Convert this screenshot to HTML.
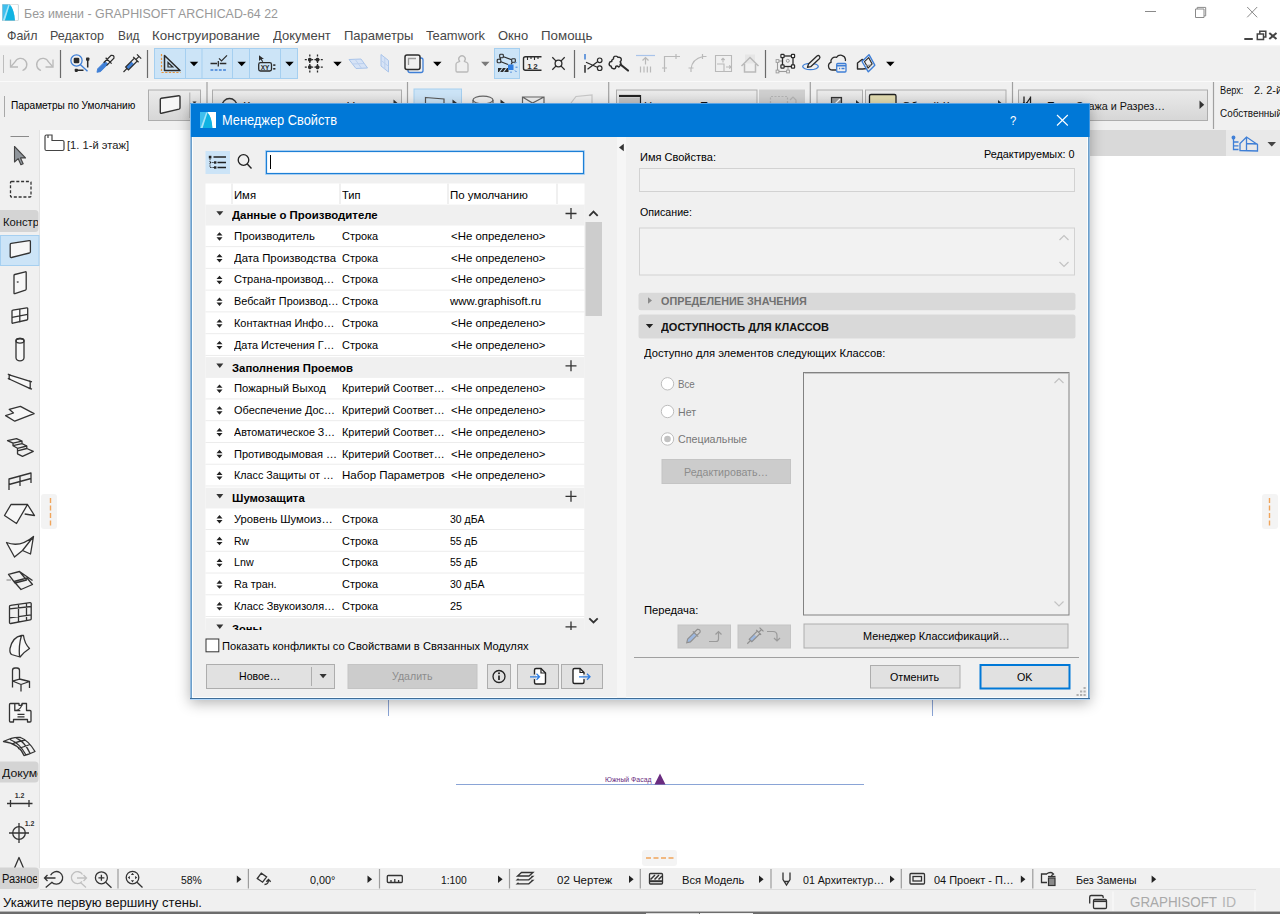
<!DOCTYPE html>
<html lang="ru"><head><meta charset="utf-8"><title>Менеджер Свойств</title>
<style>
html,body{margin:0;padding:0}
body{width:1280px;height:914px;position:relative;overflow:hidden;background:#fff;font-family:'Liberation Sans', sans-serif;}
.t{position:absolute;white-space:pre;line-height:1;transform-origin:0 50%;display:block}
div,svg{box-sizing:border-box}
</style></head><body>
<div style="position:absolute;left:0px;top:45px;width:1280px;height:85px;background:linear-gradient(#f8f8f8,#f0f0f0 2px)"></div>
<div style="position:absolute;left:0px;top:81px;width:1280px;height:1px;background:#fafafa"></div>
<div style="position:absolute;left:0px;top:130px;width:40px;height:738px;background:#f0f0f0"></div>
<div style="position:absolute;left:0px;top:868px;width:1280px;height:43px;background:#f0f0f0"></div>
<div style="position:absolute;left:0px;top:911px;width:1280px;height:1px;background:#b4b4b4"></div>
<div style="position:absolute;left:0px;top:912px;width:1280px;height:2px;background:#6d6d6d"></div>
<div style="position:absolute;left:646px;top:913px;width:53px;height:1px;background:#d8d8d8"></div>
<div style="position:absolute;left:700px;top:913px;width:53px;height:1px;background:#f0f0f0"></div>
<svg style="position:absolute;left:2px;top:3.5px" width="16.7" height="17" viewBox="0 0 16 16" preserveAspectRatio="none"><rect x="0" y="0" width="16" height="16" rx="1.2" fill="#3fbfee"/><path d="M7.300 0H16V16H12.300Q11.800 5 7.300 0z" fill="#ffffff"/><path d="M2.300 16L7 .8Q11.600 4 12.400 16z" fill="#10b3e2"/><path d="M.6 16L6.200 .3L7.400 .9L2.600 16z" fill="#a6e4f9"/><rect x=".3" y=".3" width="15.400" height="15.400" rx="1.200" fill="none" stroke="#c9c9c9" stroke-width=".6"/></svg>
<span class="t" style="left:24.00px;top:7px;font-size:13.4px;color:#999; transform:scaleX(0.9256);">Без имени - GRAPHISOFT ARCHICAD-64 22</span>
<div style="position:absolute;left:1145px;top:11px;width:10.5px;height:1px;background:#8a8a8a"></div>
<svg style="position:absolute;left:1194px;top:6px;" width="14" height="13" viewBox="0 0 14 13"><path d="M1.500 3h8.500v8.500h-8.500z M3.200 3v-1.600h8.500v8.500h-1.700" fill="none" stroke="#8a8a8a" stroke-width="1"/></svg>
<svg style="position:absolute;left:1246px;top:6px;" width="13" height="13" viewBox="0 0 13 13"><path d="M1.200 1l10 10.300M11.200 1l-10 10.300" stroke="#8a8a8a" stroke-width="1" fill="none"/></svg>
<span class="t" style="left:6.50px;top:29px;font-size:13px;color:#484848; transform:scaleX(0.9541);">Файл</span>
<span class="t" style="left:50.00px;top:29px;font-size:13px;color:#484848; transform:scaleX(0.9648);">Редактор</span>
<span class="t" style="left:117.50px;top:29px;font-size:13px;color:#484848; transform:scaleX(0.9137);">Вид</span>
<span class="t" style="left:152.00px;top:29px;font-size:13px;color:#484848; transform:scaleX(1.0246);">Конструирование</span>
<span class="t" style="left:272.70px;top:29px;font-size:13px;color:#484848; transform:scaleX(1.0022);">Документ</span>
<span class="t" style="left:343.80px;top:29px;font-size:13px;color:#484848; transform:scaleX(1.0027);">Параметры</span>
<span class="t" style="left:426.00px;top:29px;font-size:13px;color:#484848; transform:scaleX(0.9958);">Teamwork</span>
<span class="t" style="left:497.60px;top:29px;font-size:13px;color:#484848; transform:scaleX(0.9961);">Окно</span>
<span class="t" style="left:541.20px;top:29px;font-size:13px;color:#484848; transform:scaleX(1.0255);">Помощь</span>
<svg style="position:absolute;left:1244px;top:29px;" width="36" height="14" viewBox="0 0 36 14"><path d="M.3 10h8.500" stroke="#444" stroke-width="2"/><path d="M13.300 5h6.200v5.500h-6.200z M15.800 4.500v-2.200h6v5.700h-2" fill="none" stroke="#444" stroke-width="1.500"/><path d="M25.300 4l7.200 6M32.500 4l-7.200 6" stroke="#444" stroke-width="2"/></svg>
<svg style="position:absolute;left:0;top:46px" width="1280" height="36" viewBox="0 46 1280 36"><rect x="154.5" y="48.5" width="143" height="30" fill="#cce4f7" stroke="#a5cff0"/><path d="M185.5 48.5v30" stroke="#a5cff0"/><path d="M202 48.5v30" stroke="#a5cff0"/><path d="M232.5 48.5v30" stroke="#a5cff0"/><path d="M249.5 48.5v30" stroke="#a5cff0"/><path d="M280.5 48.5v30" stroke="#a5cff0"/><rect x="494.5" y="48.5" width="25" height="30" fill="#cce4f7" stroke="#a5cff0"/><path d="M3.5 55v18" stroke="#bdbdbd"/><path d="M60.5 50v28" stroke="#6a6a6a" stroke-width="1.2"/><path d="M147.5 50v28" stroke="#6a6a6a" stroke-width="1.2"/><path d="M574.5 50v28" stroke="#6a6a6a" stroke-width="1.2"/><path d="M765.5 50v28" stroke="#6a6a6a" stroke-width="1.2"/><g fill="none" stroke="#b9b9b9" stroke-width="1.3"><path d="M10.5 59.5v7.5h7.5"/><path d="M11 66.5l4-4.5a6.2 6.2 0 1 1 7.5 8.500"/></g><g fill="none" stroke="#b9b9b9" stroke-width="1.3"><path d="M53 59.5v7.500h-7.500"/><path d="M52.500 66.500l-4-4.500a6.200 6.200 0 1 0-7.500 8.500"/></g><circle cx="76.500" cy="60.500" r="5.600" fill="none" stroke="#3f7fd6" stroke-width="1.300"/><path d="M80.500 64.700l7 6.500" stroke="#3f7fd6" stroke-width="1.400"/><rect x="73.700" y="57.700" width="5.600" height="5.600" rx="1.300" fill="#2b2b2b"/><path d="M87.700 59v8.500M76 70.300h7.500" stroke="#2b2b2b" stroke-width="1.500"/><rect x="86" y="57.500" width="3.400" height="3.200" rx=".8" fill="#2b2b2b"/><rect x="74.700" y="68.700" width="3.200" height="3.200" rx=".8" fill="#2b2b2b"/><g transform="translate(105.800 63.500) rotate(45)"><path d="M-2 -1h4v10.500l-2 3l-2-3z" fill="#3f7fd6" stroke="#3f7fd6" stroke-width=".8"/><path d="M-2 -9.500q2 -2.800 4 0v5.500h-4z M-2 -4v5M2 -4v5 M-4.200 -4h8.400" fill="none" stroke="#2b2b2b" stroke-width="1.200"/></g><g transform="translate(132 63.500) rotate(45)"><path d="M-2 -1h4v8h-4z" fill="#3f7fd6"/><path d="M-2 -5.500h4v12.500h-4z M0 7v5 M-3.800 -5.500h7.600 M0 -5.500v-4.500 M-3 -10h6" fill="none" stroke="#2b2b2b" stroke-width="1.200"/></g><path d="M161.500 54v18.500h19" fill="none" stroke="#e8943a" stroke-width="1.200" stroke-dasharray="2.200 1.500"/><path d="M164.500 55.500v15h15.500z" fill="none" stroke="#2b2b2b" stroke-width="1.500" stroke-linejoin="round"/><path d="M168 62.500v4.500h4.800z" fill="none" stroke="#2b2b2b" stroke-width="1.200"/><path d="M189.75 61.75h8.5l-4.25 4.5z" fill="#000"/><path d="M210.500 63.500h6.500M218.300 61v5.500M219.800 63.500h6.500" stroke="#2b2b2b" stroke-width="1.300"/><path d="M219 58.300l2.500 2.500l5.500-5.500" fill="none" stroke="#2b2b2b" stroke-width="1.200"/><path d="M210.500 70h16" stroke="#3f7fd6" stroke-width="1.400" stroke-dasharray="2.800 1.400"/><path d="M237.45 61.75h8.5l-4.25 4.5z" fill="#000"/><path d="M259 55.300v5.800l1.700-1.500l1.500 2.400l1-.6l-1.500-2.300h2.300z" fill="#2b2b2b"/><rect x="258.700" y="62.700" width="12.800" height="8.300" rx="1.800" fill="none" stroke="#2b2b2b" stroke-width="1.300"/><rect x="273.200" y="64.300" width="2.200" height="1.600" fill="#2b2b2b"/><rect x="273.200" y="68" width="2.200" height="1.600" fill="#2b2b2b"/><text x="265.100" y="69.600" font-size="6.500" font-weight="700" text-anchor="middle" fill="#2b2b2b" font-family="Liberation Sans, sans-serif">XY</text><path d="M285.25 61.75h8.5l-4.25 4.5z" fill="#000"/><path d="M309.800 54.500v18M317.500 54.500v18M304.800 59.700h18M304.800 67.200h18" stroke="#2b2b2b" stroke-width="1.300" stroke-dasharray="2 1.200"/><rect x="308.1" y="58" width="3.400" height="3.400" rx=".8" fill="#2b2b2b"/><rect x="308.1" y="65.5" width="3.400" height="3.400" rx=".8" fill="#2b2b2b"/><rect x="315.8" y="58" width="3.400" height="3.400" rx=".8" fill="#2b2b2b"/><rect x="315.8" y="65.5" width="3.400" height="3.400" rx=".8" fill="#2b2b2b"/><path d="M333.25 61.75h8.5l-4.25 4.5z" fill="#000"/><path d="M349 59.500l12-.5l6.500 9l-11.500.5z" fill="#d6e3f6" stroke="#a9c4ea" stroke-width="1"/><path d="M355 59.200l6.500 9 M352.500 64l11.500-.500" fill="none" stroke="#bcd0ee" stroke-width="1"/><path d="M381 54.500v11.500l7.500 6v-11.500z" fill="#d6e3f6" stroke="#a9c4ea" stroke-width="1"/><path d="M384.800 57.500v11.500 M381 60.300l7.500 6" fill="none" stroke="#bcd0ee" stroke-width="1"/><rect x="408" y="58" width="15" height="14.500" rx="2" fill="none" stroke="#3f7fd6" stroke-width="1.300"/><rect x="405" y="55" width="15" height="14.500" rx="2" fill="#f0f0f0" stroke="#2b2b2b" stroke-width="1.500"/><path d="M408.500 65v-6.500h7.500" fill="none" stroke="#9a9a9a" stroke-width="1.300"/><path d="M433.05 61.75h8.5l-4.25 4.5z" fill="#000"/><path d="M459.700 61.300a3.200 3.200 0 1 1 4.600 0 l2.500 1.200q1.200.6 1.200 2v6.300a1.200 1.200 0 0 1-1.200 1.200h-9.600a1.200 1.200 0 0 1-1.200-1.200v-6.300q0-1.400 1.200-2z" fill="none" stroke="#b9b9b9" stroke-width="1.300" stroke-linejoin="round"/><path d="M481.05 61.75h8.5l-4.25 4.5z" fill="#7a7a7a"/><path d="M501.500 56l-2.500 5l9 3.500 M501.500 56l12 4.500l-2.500 4" fill="none" stroke="#2b2b2b" stroke-width="1.200"/><rect x="499.7" y="54.2" width="3.600" height="3.600" rx=".9" fill="#cce4f7" stroke="#2b2b2b" stroke-width="1.100"/><rect x="497.2" y="59.2" width="3.600" height="3.600" rx=".9" fill="#cce4f7" stroke="#2b2b2b" stroke-width="1.100"/><rect x="511.7" y="58.7" width="3.600" height="3.600" rx=".9" fill="#cce4f7" stroke="#2b2b2b" stroke-width="1.100"/><rect x="498" y="68" width="10.500" height="4" fill="#2b2b2b"/><path d="M499.500 72l3-4M503.500 72l3-4" stroke="#cce4f7" stroke-width="1.100"/><rect x="508" y="64.500" width="5.500" height="5.500" fill="#2f7de0"/><path d="M515 63.500l1.500-1.500M515.500 67.200h2M515 70.500l1.500 1.500M511 71.500v1.500" stroke="#3f7fd6" stroke-width="1"/><path d="M541.500 56.700h-16a2 2 0 0 0-2 2v9.500a2 2 0 0 0 2 2h16" fill="none" stroke="#2b2b2b" stroke-width="1.400"/><path d="M527.500 57v3M531 57v2M534.500 57v3M538 57v2" stroke="#2b2b2b" stroke-width="1.100"/><text x="533.300" y="68.600" font-size="8" font-weight="700" text-anchor="middle" fill="#2b2b2b" font-family="Liberation Sans, sans-serif" letter-spacing="1.600">12</text><circle cx="558.500" cy="63.500" r="3.400" fill="none" stroke="#2b2b2b" stroke-width="1.300"/><path d="M552.300 57.300l3.800 3.800M564.700 57.300l-3.800 3.800M552.300 69.700l3.800-3.800M564.700 69.700l-3.800-3.800" stroke="#2b2b2b" stroke-width="1.300"/><path d="M585 54v5.500" stroke="#3f7fd6" stroke-width="1.500"/><path d="M585 65v7.700" stroke="#2b2b2b" stroke-width="1.500"/><path d="M586 62.300l11.300 5M587.500 69.300l10-7.500" stroke="#2b2b2b" stroke-width="1.200"/><circle cx="599.700" cy="60.300" r="2.300" fill="none" stroke="#2b2b2b" stroke-width="1.200"/><circle cx="599.700" cy="68.200" r="2.300" fill="none" stroke="#2b2b2b" stroke-width="1.200"/><path d="M613.500 58.800q-.3-2.600 2.200-2.700q1.600-.1 2.300 1.300q2.800-.6 3.300 1.800q.3 1.700-1.200 2.600q1.700 1.800 .2 3.600l-1.500 1.700q-1.400-1.700-3-.8q.2 2.500-2.300 2.500q-2.200-.2-2.300-2.500q-2.400-.6-2-3q.5-2 2.600-1.800q-.5-1.800 1.700-2.700z" fill="none" stroke="#2b2b2b" stroke-width="1.400" stroke-linejoin="round"/><path d="M620.500 64.500l7.500 6" stroke="#2b2b2b" stroke-width="2.200" stroke-linecap="round"/><path d="M636 55.500h19" stroke="#a9c4ea" stroke-width="1.200"/><path d="M645.500 57.500v7M642.500 60.500l3-3l3 3" fill="none" stroke="#b9b9b9" stroke-width="1.200"/><path d="M640.500 66.500v6M644 66.500v6M647.300 66.500v6M650.500 66.500v6" stroke="#b9b9b9" stroke-width="1.200"/><path d="M664.500 72v-15.500h15.500M676 54v5M662 68h5" fill="none" stroke="#b9b9b9" stroke-width="1.200"/><path d="M691 72v-3q1-10 12-12.500h3.500M702.500 54v5M688.500 68h5" fill="none" stroke="#b9b9b9" stroke-width="1.200"/><path d="M715.500 55.500h16v16h-16z M717 64h7v7.500 M723 58.500v4M721.300 60l1.700-1.700l1.700 1.700 M726 67h5M729.300 65.300l1.700 1.700l-1.700 1.700" fill="none" stroke="#b9b9b9" stroke-width="1.100"/><rect x="745" y="54.500" width="10" height="9" fill="#e6e6e6"/><path d="M741.500 66l8.500-8.500l8.500 8.500 M744.500 64v8h11v-8" fill="none" stroke="#b9b9b9" stroke-width="1.500"/><rect x="777.500" y="61" width="10.500" height="10.500" fill="none" stroke="#9a9a9a" stroke-width="1.100"/><rect x="776.1" y="59.6" width="2.800" height="2.800" fill="#f0f0f0" stroke="#9a9a9a" stroke-width=".9"/><rect x="776.1" y="70.1" width="2.800" height="2.800" fill="#f0f0f0" stroke="#9a9a9a" stroke-width=".9"/><rect x="786.6" y="70.1" width="2.800" height="2.800" fill="#f0f0f0" stroke="#9a9a9a" stroke-width=".9"/><rect x="782.500" y="56" width="10.500" height="10.500" fill="#f0f0f0" stroke="#2b2b2b" stroke-width="1.300"/><circle cx="787.800" cy="60.800" r="1.500" fill="none" stroke="#9a9a9a"/><rect x="780.9" y="54.4" width="3.200" height="3.200" rx=".6" fill="#f0f0f0" stroke="#2b2b2b" stroke-width="1.200"/><rect x="791.4" y="54.4" width="3.200" height="3.200" rx=".6" fill="#f0f0f0" stroke="#2b2b2b" stroke-width="1.200"/><rect x="780.9" y="64.9" width="3.200" height="3.200" rx=".6" fill="#f0f0f0" stroke="#2b2b2b" stroke-width="1.200"/><rect x="791.4" y="64.9" width="3.200" height="3.200" rx=".6" fill="#f0f0f0" stroke="#2b2b2b" stroke-width="1.200"/><ellipse cx="810.500" cy="66.500" rx="7.800" ry="3.200" fill="none" stroke="#3f7fd6" stroke-width="1.300"/><path d="M807.500 67.300l1-3.300l8.500-8q1.500-1 2.500 .2q1 1.300-.2 2.500l-8.600 8z" fill="#f0f0f0" stroke="#2b2b2b" stroke-width="1.300" stroke-linejoin="round"/><path d="M836 70h-3.500a4 4 0 0 1-1.500-7.700a4.300 4.300 0 0 1 5.500-5a5 5 0 0 1 9 2.200q0 .8-.2 1.500" fill="none" stroke="#2b2b2b" stroke-width="1.300"/><rect x="836.700" y="63.500" width="9.300" height="8.500" rx="1" fill="#f0f0f0" stroke="#3f7fd6" stroke-width="1.300"/><path d="M836.700 65.700h9.300" stroke="#3f7fd6" stroke-width="1.600"/><path d="M839 68.500h1.200M841.500 68.500h3" stroke="#3f7fd6" stroke-width="1.300"/><path d="M857.500 63l4.500-3.500l5 1.500v7.500l-4.500 .5h-5z" fill="none" stroke="#2b2b2b" stroke-width="1.400" stroke-linejoin="round"/><path d="M862 61.500l7-6.800l5.800 10.500l-6.500 6.600z" fill="#f0f0f0" stroke="#3f7fd6" stroke-width="1.400" stroke-linejoin="round"/><path d="M864.500 61.700l4.200-4l3.400 6.300l-4 4z" fill="none" stroke="#2b2b2b" stroke-width="1.100"/><path d="M866 65.500l5.500-.5" stroke="#888" stroke-width="1"/><path d="M886.05 61.75h8.5l-4.25 4.5z" fill="#000"/></svg>
<svg style="position:absolute;left:0;top:82px" width="1280" height="48" viewBox="0 82 1280 48"><defs><linearGradient id="ibg" x1="0" y1="0" x2="0" y2="1"><stop offset="0" stop-color="#ebebeb"/><stop offset="1" stop-color="#d6d6d6"/></linearGradient></defs><path d="M4.500 96v21" stroke="#a8a8a8"/><path d="M207 82v47" stroke="#a0a0a0" stroke-width="1.200"/><path d="M407.5 82v47" stroke="#a0a0a0" stroke-width="1.200"/><path d="M608.7 82v47" stroke="#a0a0a0" stroke-width="1.200"/><path d="M810.3 82v47" stroke="#a0a0a0" stroke-width="1.200"/><path d="M1012.5 82v47" stroke="#a0a0a0" stroke-width="1.200"/><path d="M1213.5 82v47" stroke="#a0a0a0" stroke-width="1.200"/><rect x="148.5" y="90" width="52" height="30.500" fill="url(#ibg)" stroke="#adadad"/><path d="M189.800 92.500v25.500" stroke="#adadad"/><path d="M160.300 99.500q0-1 1-1.200l17.500-2.600q1.200-.1 1.200 1.100v11q0 1-1 1.300l-17.500 4.200q-1.200.2-1.200-1z" fill="#f6f6f6" stroke="#333" stroke-width="1.400"/><path d="M192.500 101.500h4l-2 2.500z" fill="#333"/><rect x="212.5" y="90" width="189" height="30.500" fill="url(#ibg)" stroke="#adadad"/><circle cx="229.500" cy="106" r="7.500" fill="none" stroke="#333" stroke-width="1.300"/><path d="M393.500 99.500l4 3.500l-4 3.500z" fill="#333"/><rect x="414" y="89" width="47.500" height="32" fill="#cce4f7" stroke="#a5cff0"/><path d="M425.500 97.500l18.500 1.500v14h-18.500z" fill="none" stroke="#555" stroke-width="1.200"/><path d="M452.500 99.500l4.500 3.500l-4.500 3.500z" fill="#333"/><ellipse cx="483" cy="100" rx="10" ry="3.800" fill="none" stroke="#666" stroke-width="1.200"/><path d="M473 100v10M493 100v10" stroke="#666" stroke-width="1.200"/><path d="M500.500 99.500l4.500 3.500l-4.500 3.500z" fill="#333"/><path d="M522.500 97h21.500v14h-21.500zM522.500 97l10 6l11.500-6" fill="none" stroke="#666" stroke-width="1.200"/><path d="M571 103l5-6.500l16-1.500v10" fill="none" stroke="#c8c8c8" stroke-width="1.200"/><rect x="616.5" y="90" width="140.5" height="30.500" fill="url(#ibg)" stroke="#adadad"/><path d="M619 96h21" stroke="#222" stroke-width="2.200"/><path d="M619 98h21v10h-21z" fill="#c4c4c4"/><path d="M640.500 95v13" stroke="#222" stroke-width="1.200"/><rect x="759.5" y="90" width="45" height="30.500" fill="#cfcfcf" stroke="#cfcfcf"/><path d="M770.500 103v-6.500h17v6.500" fill="none" stroke="#b4b4b4" stroke-width="1.200" stroke-dasharray="2 1.500"/><path d="M790 100l3-3l3 3v4" fill="none" stroke="#b4b4b4" stroke-width="1.200"/><rect x="817" y="90" width="45.5" height="30.500" fill="url(#ibg)" stroke="#adadad"/><rect x="831.500" y="97.500" width="10" height="10" fill="#9a9a9a" stroke="#333" stroke-width="1.200"/><path d="M833 106l7-7" stroke="#fff" stroke-width="1.200"/><path d="M856 100l4 3.500l-4 3.500z" fill="#333"/><rect x="865.5" y="90" width="140.5" height="30.500" fill="url(#ibg)" stroke="#adadad"/><rect x="869.500" y="94.500" width="26.500" height="22" rx="1.500" fill="#e3dcb0" stroke="#222" stroke-width="1.300"/><path d="M998 100l4 3.500l-4 3.500z" fill="#333"/><rect x="1018.5" y="90" width="189" height="30.500" fill="url(#ibg)" stroke="#adadad"/><path d="M1024 108v-11.500M1030.500 108v-11.500M1024 107l6.500-9.500" stroke="#222" stroke-width="1.300"/><path d="M1199.500 100.500l4.700 4.200l-4.700 4.200z" fill="#333"/></svg>
<span class="t" style="left:10.60px;top:100px;font-size:11px;color:#000; transform:scaleX(0.9190);">Параметры по Умолчанию</span>
<span class="t" style="left:1047.00px;top:101px;font-size:11.8px;color:#111; transform:scaleX(0.9146);">План Этажа и Разрез…</span>
<span class="t" style="left:242.70px;top:101px;font-size:11.8px;color:#111; transform:scaleX(1.0443);">Конструктивные - Несущие</span>
<span class="t" style="left:644.30px;top:101px;font-size:11.8px;color:#111; transform:scaleX(0.9607);">Наружная Поверхность</span>
<span class="t" style="left:901.75px;top:101px;font-size:11.8px;color:#111; transform:scaleX(0.9655);">Общий Конструктивный</span>
<span class="t" style="left:1219.60px;top:86px;font-size:10px;color:#111; transform:scaleX(0.9188);">Верх:</span>
<span class="t" style="left:1253.70px;top:86px;font-size:10px;color:#111; transform:scaleX(1.0933);">2. 2-й</span>
<span class="t" style="left:1219.60px;top:109px;font-size:10px;color:#111; transform:scaleX(0.9910);">Собственный</span>
<div style="position:absolute;left:1000px;top:130px;width:226px;height:26px;background:#d9d9d9"></div>
<div style="position:absolute;left:1226px;top:130px;width:54px;height:26px;background:#e9e9e9"></div>
<svg style="position:absolute;left:1230px;top:134px;" width="52" height="20" viewBox="0 0 52 20"><g fill="none" stroke="#3f7fd6" stroke-width="1.300"><path d="M3.500 3.500v12h5M3.500 8h5M3.500 11.800h5"/><circle cx="3.500" cy="3.500" r="1.300" fill="#3f7fd6"/><path d="M10 16.500v-7l6.500-6.500l11 7.500v6.500zM16.500 3l0 13.500M16.500 9.500l11 .5"/></g><path d="M37.500 8h8.500l-4.250 4.500z" fill="#444"/></svg>
<div style="position:absolute;left:39px;top:130px;width:1px;height:738px;background:#e2e2e2"></div>
<svg style="position:absolute;left:0;top:130px" width="40" height="760" viewBox="0 130 40 760"><path d="M10.500 136.500h18.500" stroke="#8a8a8a"/><path d="M14.500 146.500v15.500l3.700-3.300l2.700 6l2.300-1l-2.700-5.800h5z" fill="#8f959b" stroke="#444" stroke-width="1.100" stroke-linejoin="round"/><rect x="10.500" y="181.500" width="20.500" height="15.500" rx="1" fill="none" stroke="#333" stroke-width="1.300" stroke-dasharray="3 1.800"/><rect x="-3" y="210" width="41.500" height="22" rx="3.500" fill="#d4d4d4"/><rect x=".5" y="235.500" width="38.500" height="30" fill="#cce4f7" stroke="#a5cff0"/><path d="M10.200 244.500q0-1 1-1.200l18-2.700q1.200-.1 1.200 1.100v10q0 1-1 1.300l-18 4.500q-1.200.2-1.200-1z" fill="#f7f7f7" stroke="#333" stroke-width="1.300" stroke-linejoin="round"/><path d="M14 275.500q0-.8.800-1l10.500-2.700q.9-.2.900.7v16.500q0 .8-.8 1.100l-10.500 3.500q-.9.300-.9-.6z" fill="#f7f7f7" stroke="#333" stroke-width="1.300" stroke-linejoin="round"/><path d="M16.800 282.200l1.800-.4" stroke="#333" stroke-width="1.300"/><path d="M12 311q0-.8.800-.9l14-2.300q.9-.1.900.7v10.500q0 .8-.8 1l-14 3.200q-.9.200-.9-.6z" fill="#f7f7f7" stroke="#333" stroke-width="1.300" stroke-linejoin="round"/><path d="M19.800 309v13.300M12 317.300l15.700-3" fill="none" stroke="#333" stroke-width="1.300" stroke-linejoin="round"/><path d="M16 340.800a4 2.300 0 0 1 8 0v17a4 3 0 0 1 -8 0z" fill="#f7f7f7" stroke="#333" stroke-width="1.300" stroke-linejoin="round"/><ellipse cx="20" cy="340.800" rx="4" ry="2.300" fill="none" stroke="#333" stroke-width="1.300" stroke-linejoin="round"/><path d="M9.200 374.800l21 6.500v7.300l-21-9.600z" fill="#f7f7f7" stroke="#333" stroke-width="1.300" stroke-linejoin="round"/><path d="M7.800 374.200l2.600.8M7.800 378.400l2.600 1M29 381l3 .9M28.800 388.200l3.200 1" fill="none" stroke="#333" stroke-width="1.300" stroke-linejoin="round"/><path d="M9.200 409.300l11.200-2.900l13.700 7.200l-19.300 7.600l-9.200-5.600l7.900-2.600z" fill="#f7f7f7" stroke="#333" stroke-width="1.300" stroke-linejoin="round"/><path d="M7.500 440.600l9-1.900l5.500 2.500l-9 2zM13 443.200v2.500l9-2v-2.500M22 443.700l4.800 2.300l-9.300 2.300l-4.500-2.600M17.500 448.300v2.500l9.300-2.300v-2.500M26.800 448.500l6.500 2.800l-10.800 5l-5-2.500v-3" fill="none" stroke="#333" stroke-width="1.300" stroke-linejoin="round"/><path d="M9 490v-11l22-6v10M9 484.500l22-6M20 476v10" fill="none" stroke="#333" stroke-width="1.300" stroke-linejoin="round"/><path d="M4.500 515.500l6.500-11h16.500l-11 19z M27.500 504.500l7 11l-9.800-1.500" fill="#f7f7f7" stroke="#333" stroke-width="1.300" stroke-linejoin="round"/><path d="M6.500 542.500q13.500 5.500 27-6l-3 17.500l-8-3.500l-8 6.500z M22.500 550.500l11-14" fill="#f7f7f7" stroke="#333" stroke-width="1.300" stroke-linejoin="round"/><path d="M8.500 574.300l11-2.800l7 8.500l-11.500 3z M19.500 571.500l13 9 M14 581.500l13-3.500l5.500 6.500l-11.500 5z" fill="none" stroke="#333" stroke-width="1.300" stroke-linejoin="round"/><path d="M6.500 580h4.500" stroke="#999" stroke-width="1.300"/><path d="M9.500 606.500q0-1 1-1.100l19.500-2.700q1.200-.1 1.200 1v15q0 1-1 1.200l-19.500 3.600q-1.200.2-1.200-1z M18.500 604.300v18M26.500 603.200v16.700M9.500 608.800l21.700-2.300M9.500 617.800l21.700-3" fill="none" stroke="#333" stroke-width="1.300" stroke-linejoin="round"/><path d="M21.500 635.500q-9 1.500-11.500 13q-.5 4.500 1.500 6l8.500 2.500q4-5 9.500-8.500q-5-5-6-13z M21.500 635.500q-3 10-2 21.500" fill="#f7f7f7" stroke="#333" stroke-width="1.300" stroke-linejoin="round"/><path d="M12.500 681v-10.500q0-2.500 2.500-2.500h2q2.500 0 2.500 2.500v8.500 M12.500 681l7-2l10 2.500l-8.500 3z M12.500 681v6.500M21 684.500v7M29.500 681.500v6.500" fill="none" stroke="#333" stroke-width="1.300" stroke-linejoin="round"/><path d="M10.500 703.500h8.500v1.800h3v-1.800h4.500v7h3.500q1 0 1 1v9.500q0 1-1 1h-2.500v-2.500h-14v2.500h-3q-1 0-1-1v-16.500q0-1 1-1z" fill="#f7f7f7" stroke="#333" stroke-width="1.300" stroke-linejoin="round"/><path d="M14.800 704v6.700h5.500M14.800 710.700q6-.5 7.200-6.700M17.500 714.300h7M17.500 716.800h7" fill="none" stroke="#333" stroke-width="1.300" stroke-linejoin="round"/><path d="M3.500 741.500q10-5 17-4q8 3 14.500 14q-6 3-11 4q-5-12-20.500-14z M10 739.500q10 4 16 15.500M16 737.800q9 4 14 15.500M11.500 744q8-3 14-4M18 748.500q7-2 12-4" fill="none" stroke="#333" stroke-width="1.300" stroke-linejoin="round"/><rect x="-3" y="761.500" width="41.500" height="21" rx="3.500" fill="#d4d4d4"/><path d="M7 803.500h25.500M10.500 800v7M29 800v7" stroke="#333" stroke-width="1.300"/><text x="19.500" y="798" font-size="7" font-weight="700" text-anchor="middle" fill="#333" font-family="Liberation Sans, sans-serif">1.2</text><circle cx="19" cy="833" r="6.300" fill="none" stroke="#333" stroke-width="1.300" stroke-linejoin="round"/><path d="M19 823v20M9 833h20" stroke="#333" stroke-width="1.300"/><text x="29.500" y="825.500" font-size="7" font-weight="700" text-anchor="middle" fill="#333" font-family="Liberation Sans, sans-serif">1.2</text><path d="M14.500 868l4.500-10.500l4.500 10.500" fill="none" stroke="#333" stroke-width="1.300" stroke-linejoin="round"/><rect x="-3" y="867.500" width="42" height="21.500" rx="4" fill="#d4d4d4"/></svg>
<div style="position:absolute;left:0;top:205px;width:38px;height:30px;overflow:hidden"><span class="t" style="left:2.50px;top:12px;font-size:11.8px;color:#111; transform:scaleX(0.9521);">Констр</span></div>
<div style="position:absolute;left:0;top:757px;width:38px;height:30px;overflow:hidden"><span class="t" style="left:2.00px;top:11px;font-size:11.8px;color:#111; transform:scaleX(1.0390);">Докуме</span></div>
<div style="position:absolute;left:0;top:862px;width:37px;height:30px;overflow:hidden"><span class="t" style="left:2.00px;top:11px;font-size:12px;color:#111; transform:scaleX(0.9211);">Разное</span></div>
<svg style="position:absolute;left:44px;top:134px;" width="22" height="18" viewBox="0 0 22 18"><path d="M1 2.500q0-1.500 1.500-1.500h5.500v5.500h10.500q1.500 0 1.500 1.500v7q0 1.500-1.500 1.500h-16q-1.500 0-1.500-1.500z M4 1v3" fill="none" stroke="#444" stroke-width="1.200"/></svg>
<span class="t" style="left:66.50px;top:140px;font-size:11px;color:#222; transform:scaleX(1.0148);">[1. 1-й этаж]</span>
<div style="position:absolute;left:41px;top:494px;width:16px;height:35px;background:#f3f3f3;border-radius:3px"></div>
<svg style="position:absolute;left:47.5px;top:497.5px;" width="5" height="29" viewBox="0 0 5 29"><path d="M2.500 0v28" stroke="#f0a45a" stroke-width="1.400" stroke-dasharray="5 2.500"/></svg>
<div style="position:absolute;left:1261.5px;top:494px;width:16.5px;height:35px;background:#f4f4f4;border-radius:3px"></div>
<svg style="position:absolute;left:1266.5px;top:497.5px;" width="5" height="29" viewBox="0 0 5 29"><path d="M2.500 0v28" stroke="#f0a45a" stroke-width="1.400" stroke-dasharray="5 2.500"/></svg>
<div style="position:absolute;left:642px;top:850px;width:34.5px;height:16px;background:#f4f4f4;border-radius:3px"></div>
<svg style="position:absolute;left:645.6px;top:855.5px;" width="28" height="4" viewBox="0 0 28 4"><path d="M0 2h28" stroke="#f0a45a" stroke-width="1.400" stroke-dasharray="5 2.500"/></svg>
<div style="position:absolute;left:387.5px;top:699px;width:1px;height:17px;background:#8aa4d6"></div>
<div style="position:absolute;left:932px;top:699px;width:1px;height:17px;background:#8aa4d6"></div>
<div style="position:absolute;left:456px;top:784px;width:408px;height:1px;background:#8aa4d6"></div>
<svg style="position:absolute;left:654px;top:773px;" width="12" height="12" viewBox="0 0 12 12"><path d="M6 .5l5.500 11h-11z" fill="#6a2c80"/></svg>
<span class="t" style="left:604.50px;top:777px;font-size:6.5px;color:#6a2c80; transform:scaleX(1.0610);">Южный Фасад</span>
<svg style="position:absolute;left:0;top:868px" width="1280" height="44" viewBox="0 868 1280 44"><path d="M40 889.500h1216" stroke="#dcdcdc"/><path d="M118 869v19.500" stroke="#9c9c9c" stroke-width="1.200"/><path d="M248.4 869v19.500" stroke="#9c9c9c" stroke-width="1.200"/><path d="M379.5 869v19.500" stroke="#9c9c9c" stroke-width="1.200"/><path d="M509.5 869v19.500" stroke="#9c9c9c" stroke-width="1.200"/><path d="M640.3 869v19.500" stroke="#9c9c9c" stroke-width="1.200"/><path d="M771 869v19.500" stroke="#9c9c9c" stroke-width="1.200"/><path d="M901.3 869v19.500" stroke="#9c9c9c" stroke-width="1.200"/><path d="M1032.8 869v19.500" stroke="#9c9c9c" stroke-width="1.200"/><path d="M236.8 875.400l4.600 3.800l-4.600 3.800z" fill="#222"/><path d="M367.5 875.400l4.600 3.800l-4.600 3.800z" fill="#222"/><path d="M498 875.400l4.600 3.800l-4.600 3.800z" fill="#222"/><path d="M629 875.400l4.600 3.800l-4.600 3.800z" fill="#222"/><path d="M759 875.400l4.600 3.800l-4.600 3.800z" fill="#222"/><path d="M890 875.400l4.600 3.800l-4.600 3.800z" fill="#222"/><path d="M1020.8 875.400l4.600 3.800l-4.600 3.800z" fill="#222"/><path d="M1151.6 875.400l4.600 3.800l-4.600 3.800z" fill="#222"/><path d="M50.600 875.300a6.300 6.300 0 1 1 .9 6.500M52 882.300l-6.300 5.200M44.500 878h11M47.500 875l-3 3l3 3" fill="none" stroke="#333" stroke-width="1.300"/><path d="M82.500 874.500a6 6 0 1 0 -.5 7M80.500 882.500l5.500 5M77 878h9.500M83.500 875l3 3l-3 3" fill="none" stroke="#c0c0c0" stroke-width="1.300"/><circle cx="101.400" cy="877.800" r="6" fill="none" stroke="#333" stroke-width="1.300"/><path d="M105.700 882.200l5.800 5.500M98.400 877.800h6M101.400 874.800v6" fill="none" stroke="#333" stroke-width="1.300"/><circle cx="132.500" cy="877.600" r="6.300" fill="none" stroke="#333" stroke-width="1.300"/><path d="M137 882.200l5.500 5.300" fill="none" stroke="#333" stroke-width="1.300"/><path d="M132.500 872.800l1.600 2.200h-3.200zM132.500 882.400l1.600-2.200h-3.200zM127.700 877.600l2.200-1.600v3.200zM137.300 877.600l-2.200-1.600v3.200z" fill="#333"/><path d="M257.300 878.500l4-5.300l5.300 3.700l-4 5.300z M264.500 884.500q4 0 4-4.500M266.300 881.800l2.200-2.300l2.200 2.300" fill="none" stroke="#333" stroke-width="1.300"/><rect x="387.300" y="875.500" width="15" height="7" rx="1" fill="none" stroke="#333" stroke-width="1.300"/><path d="M391 882.500v-2.500M394.800 882.500v-3.500M398.600 882.500v-2.500" fill="none" stroke="#333" stroke-width="1.300"/><path d="M521.500 872.500h11.500l-4 3.500h-11.500z M518.500 878.800l-1.200 1h11.500l4-3.500h-1.500 M518.500 882.800l-1.200 1h11.500l4-3.500h-1.500" fill="none" stroke="#333" stroke-width="1.300"/><rect x="649.500" y="873.500" width="13" height="10.500" rx="1" fill="none" stroke="#333" stroke-width="1.300"/><path d="M649.500 881.200h13" stroke="#333" stroke-width="2"/><path d="M650.500 879.500l4.500-4.500M654.500 879.500l4.500-4.500M658.500 879.500l3.500-3.500" stroke="#333" stroke-width="1.500"/><path d="M783 872.500v7l3.500 5.500l3.500-5.500v-7 M784.500 881.500h4" fill="none" stroke="#333" stroke-width="1.300"/><rect x="910" y="873.500" width="14.500" height="10.500" rx="1" fill="none" stroke="#333" stroke-width="1.300"/><rect x="913" y="876.500" width="8.500" height="4.500" fill="none" stroke="#333" stroke-width="1.300"/><path d="M1047 874h-5.500v8.500h5.500 M1046.500 874q4-3 7 0M1051.300 872.200l2.200 1.800l-2.200 1.800" fill="none" stroke="#333" stroke-width="1.300"/><rect x="1048.500" y="878" width="6.500" height="7.500" fill="#8a8a8a" stroke="#333" stroke-width="1.200"/><path d="M1048 876.500h7.500" stroke="#333" stroke-width="1.300"/><path d="M1089.700 903.500v-6.500q0-1.500 1.500-1.500h10.500q1.500 0 1.500 1.500v1" fill="none" stroke="#333" stroke-width="1.300"/><rect x="1093.500" y="899.500" width="13" height="9" rx="1.200" fill="none" stroke="#333" stroke-width="1.300"/><path d="M1093.500 901.300h13" stroke="#333" stroke-width="1.600"/><path d="M1113 891.500v19.500M1255 891.500v19.500" stroke="#fbfbfb" stroke-width="1.200"/></svg>
<span class="t" style="left:181.20px;top:875px;font-size:11.8px;color:#111; transform:scaleX(0.8804);">58%</span>
<span class="t" style="left:310.00px;top:875px;font-size:11.8px;color:#111; transform:scaleX(0.9174);">0,00°</span>
<span class="t" style="left:440.60px;top:875px;font-size:11.8px;color:#111; transform:scaleX(0.8737);">1:100</span>
<span class="t" style="left:556.50px;top:875px;font-size:11.8px;color:#111; transform:scaleX(0.9732);">02 Чертеж</span>
<span class="t" style="left:682.40px;top:875px;font-size:11.8px;color:#111; transform:scaleX(0.9486);">Вся Модель</span>
<span class="t" style="left:803.40px;top:875px;font-size:11.8px;color:#111; transform:scaleX(0.9014);">01 Архитектур…</span>
<span class="t" style="left:934.40px;top:875px;font-size:11.8px;color:#111; transform:scaleX(0.9276);">04 Проект - П…</span>
<span class="t" style="left:1075.50px;top:875px;font-size:11.8px;color:#111; transform:scaleX(0.9154);">Без Замены</span>
<span class="t" style="left:3.00px;top:896px;font-size:13.4px;color:#111; transform:scaleX(0.9789);">Укажите первую вершину стены.</span>
<span class="t" style="left:1130.00px;top:895px;font-size:14px;color:#a9a9a9; transform:scaleX(0.9559);">GRAPHISOFT</span>
<span class="t" style="left:1222.00px;top:895px;font-size:14px;color:#b5b5b5; transform:scaleX(1.0000);">ID</span>
<div style="position:absolute;left:190px;top:103px;width:900px;height:597px;background:#f0f0f0;box-shadow:0 3px 13px 0 rgba(0,0,0,.30)"></div>
<div style="position:absolute;left:190px;top:136px;width:1px;height:563px;background:#93bbdf"></div>
<div style="position:absolute;left:191px;top:136px;width:1px;height:563px;background:#6c9ec9"></div>
<div style="position:absolute;left:192px;top:136px;width:1px;height:562px;background:#fbfeff"></div>
<div style="position:absolute;left:1087px;top:136px;width:1px;height:562px;background:#fbfeff"></div>
<div style="position:absolute;left:1088px;top:136px;width:1px;height:563px;background:#6c9ec9"></div>
<div style="position:absolute;left:1089px;top:136px;width:1px;height:563px;background:#93bbdf"></div>
<div style="position:absolute;left:192px;top:697px;width:896px;height:1px;background:#fbfeff"></div>
<div style="position:absolute;left:190px;top:698px;width:900px;height:1px;background:#3f6d98"></div>
<div style="position:absolute;left:190px;top:699px;width:900px;height:1px;background:#b4d9fb"></div>
<div style="position:absolute;left:190px;top:103px;width:900px;height:34px;background:#0078d7"></div>
<div style="position:absolute;left:190px;top:103px;width:900px;height:1px;background:#5ba4e6"></div>
<div style="position:absolute;left:190px;top:104px;width:1px;height:33px;background:#7fbcf0"></div>
<div style="position:absolute;left:1089px;top:104px;width:1px;height:33px;background:#3d95e0"></div>
<svg style="position:absolute;left:200px;top:112px" width="16" height="16" viewBox="0 0 16 16" preserveAspectRatio="none"><rect x="0" y="0" width="16" height="16" rx="0" fill="#3fbfee"/><path d="M7.300 0H16V16H12.300Q11.800 5 7.300 0z" fill="#ffffff"/><path d="M2.300 16L7 .8Q11.600 4 12.400 16z" fill="#10b3e2"/><path d="M.6 16L6.200 .3L7.400 .9L2.600 16z" fill="#a6e4f9"/></svg>
<span class="t" style="left:222.00px;top:113px;font-size:14px;color:#fff; transform:scaleX(0.9151);">Менеджер Свойств</span>
<span class="t" style="left:1009.60px;top:114px;font-size:13.5px;color:#fff; transform:scaleX(0.8383);">?</span>
<svg style="position:absolute;left:1056px;top:114px;" width="13" height="13" viewBox="0 0 13 13"><path d="M1 1l10.800 10.500M11.800 1l-10.800 10.500" stroke="#fff" stroke-width="1.100" fill="none"/></svg>
<svg style="position:absolute;left:191px;top:136px" width="440" height="494" viewBox="191 136 440 494"><rect x="205.500" y="151" width="24.500" height="23" fill="#cce4f7"/><path d="M213.500 157h12.500M217.500 162.500h8.500M217.500 167.500h8.500" stroke="#222" stroke-width="1.700"/><path d="M210 158.500v9h4.500M210 162.500h4.500" fill="none" stroke="#222" stroke-width="1" stroke-dasharray="1.300 1"/><rect x="208.800" y="155.800" width="2.600" height="2.600" fill="#222"/><rect x="214" y="161.300" width="2.400" height="2.400" fill="#222"/><rect x="214" y="166.300" width="2.400" height="2.400" fill="#222"/><circle cx="243.500" cy="160" r="5.300" fill="none" stroke="#222" stroke-width="1.300"/><path d="M247.300 164l4.200 4.500" stroke="#222" stroke-width="1.400"/><rect x="265.500" y="150.500" width="319" height="24" fill="none" stroke="#b9d7f3" stroke-width="1"/><rect x="266.500" y="151.500" width="317" height="22" fill="#fff" stroke="#1c7fd6" stroke-width="1.200"/><path d="M270.500 155v14" stroke="#000" stroke-width="1"/><rect x="205.500" y="183.500" width="379" height="20.800" fill="#fff"/><path d="M232 183.500v20.800" stroke="#f0f0f0" stroke-width="2"/><path d="M340 183.500v20.800" stroke="#f0f0f0" stroke-width="2"/><path d="M448 183.500v20.800" stroke="#f0f0f0" stroke-width="2"/><path d="M557 183.500v20.800" stroke="#f0f0f0" stroke-width="2"/><rect x="205.500" y="204.300" width="379" height="425.700" fill="#fff"/><rect x="584.500" y="204.300" width="18" height="425.700" fill="#f0f0f0"/><rect x="585.500" y="222" width="16.500" height="94" fill="#cdcdcd"/><path d="M589.300 215.800l4.200-4.200l4.200 4.200M589.300 618.300l4.200 4.200l4.200-4.200" fill="none" stroke="#333" stroke-width="1.800"/><rect x="205.500" y="204.80" width="379" height="20.76" fill="#f0f0f0"/><path d="M216.300 211.18h7l-3.500 4.400z" fill="#333"/><path d="M565.500 213.48h11M571 207.98v11" stroke="#333" stroke-width="1.300"/><path d="M205.500 246.62h379" stroke="#ececec" stroke-width="1"/><path d="M216.500 235.54l3-3.400l3 3.400zM216.500 237.24l3 3.400l3-3.400z" fill="#222"/><path d="M205.500 268.38h379" stroke="#ececec" stroke-width="1"/><path d="M216.500 257.30l3-3.400l3 3.400zM216.500 259.00l3 3.400l3-3.400z" fill="#222"/><path d="M205.500 290.14h379" stroke="#ececec" stroke-width="1"/><path d="M216.500 279.06l3-3.400l3 3.400zM216.500 280.76l3 3.400l3-3.400z" fill="#222"/><path d="M205.500 311.90h379" stroke="#ececec" stroke-width="1"/><path d="M216.500 300.82l3-3.400l3 3.400zM216.500 302.52l3 3.400l3-3.400z" fill="#222"/><path d="M205.500 333.66h379" stroke="#ececec" stroke-width="1"/><path d="M216.500 322.58l3-3.400l3 3.400zM216.500 324.28l3 3.400l3-3.400z" fill="#222"/><path d="M205.500 355.42h379" stroke="#ececec" stroke-width="1"/><path d="M216.500 344.34l3-3.400l3 3.400zM216.500 346.04l3 3.400l3-3.400z" fill="#222"/><rect x="205.500" y="357.12" width="379" height="20.76" fill="#f0f0f0"/><path d="M216.300 363.50h7l-3.500 4.400z" fill="#333"/><path d="M565.500 365.80h11M571 360.30v11" stroke="#333" stroke-width="1.300"/><path d="M205.500 398.94h379" stroke="#ececec" stroke-width="1"/><path d="M216.500 387.86l3-3.400l3 3.400zM216.500 389.56l3 3.400l3-3.400z" fill="#222"/><path d="M205.500 420.70h379" stroke="#ececec" stroke-width="1"/><path d="M216.500 409.62l3-3.400l3 3.400zM216.500 411.32l3 3.400l3-3.400z" fill="#222"/><path d="M205.500 442.46h379" stroke="#ececec" stroke-width="1"/><path d="M216.500 431.38l3-3.400l3 3.400zM216.500 433.08l3 3.400l3-3.400z" fill="#222"/><path d="M205.500 464.22h379" stroke="#ececec" stroke-width="1"/><path d="M216.500 453.14l3-3.400l3 3.400zM216.500 454.84l3 3.400l3-3.400z" fill="#222"/><path d="M205.500 485.98h379" stroke="#ececec" stroke-width="1"/><path d="M216.500 474.90l3-3.400l3 3.400zM216.500 476.60l3 3.400l3-3.400z" fill="#222"/><rect x="205.500" y="487.68" width="379" height="20.76" fill="#f0f0f0"/><path d="M216.300 494.06h7l-3.500 4.400z" fill="#333"/><path d="M565.500 496.36h11M571 490.86v11" stroke="#333" stroke-width="1.300"/><path d="M205.500 529.50h379" stroke="#ececec" stroke-width="1"/><path d="M216.500 518.42l3-3.400l3 3.400zM216.500 520.12l3 3.400l3-3.400z" fill="#222"/><path d="M205.500 551.26h379" stroke="#ececec" stroke-width="1"/><path d="M216.500 540.18l3-3.400l3 3.400zM216.500 541.88l3 3.400l3-3.400z" fill="#222"/><path d="M205.500 573.02h379" stroke="#ececec" stroke-width="1"/><path d="M216.500 561.94l3-3.400l3 3.400zM216.500 563.64l3 3.400l3-3.400z" fill="#222"/><path d="M205.500 594.78h379" stroke="#ececec" stroke-width="1"/><path d="M216.500 583.70l3-3.400l3 3.400zM216.500 585.40l3 3.400l3-3.400z" fill="#222"/><path d="M205.500 616.54h379" stroke="#ececec" stroke-width="1"/><path d="M216.500 605.46l3-3.400l3 3.400zM216.500 607.16l3 3.400l3-3.400z" fill="#222"/><rect x="205.500" y="618.24" width="379" height="20.76" fill="#f0f0f0"/><path d="M216.300 624.62h7l-3.500 4.400z" fill="#333"/><path d="M565.500 626.92h11M571 621.42v11" stroke="#333" stroke-width="1.300"/></svg>
<span class="t" style="left:234.40px;top:190px;font-size:11.5px;color:#000; transform:scaleX(0.9819);">Имя</span>
<span class="t" style="left:342.30px;top:190px;font-size:11.5px;color:#000; transform:scaleX(0.9650);">Тип</span>
<span class="t" style="left:450.20px;top:190px;font-size:11.5px;color:#000; transform:scaleX(1.0002);">По умолчанию</span>
<div style="position:absolute;left:0;top:0;width:1280px;height:630px;overflow:hidden"><span class="t" style="left:232.30px;top:210px;font-size:11.8px;color:#000;font-weight:700; transform:scaleX(0.9665);">Данные о Производителе</span><span class="t" style="left:234.00px;top:231px;font-size:11.5px;color:#000; transform:scaleX(0.9869);">Производитель</span><span class="t" style="left:342.30px;top:231px;font-size:11.5px;color:#000; transform:scaleX(0.9488);">Строка</span><span class="t" style="left:451.30px;top:231px;font-size:11.5px;color:#000; transform:scaleX(0.9939);">&lt;Не определено&gt;</span><span class="t" style="left:234.00px;top:253px;font-size:11.5px;color:#000; transform:scaleX(0.9842);">Дата Производства</span><span class="t" style="left:342.30px;top:253px;font-size:11.5px;color:#000; transform:scaleX(0.9488);">Строка</span><span class="t" style="left:451.30px;top:253px;font-size:11.5px;color:#000; transform:scaleX(0.9939);">&lt;Не определено&gt;</span><span class="t" style="left:234.00px;top:274px;font-size:11.5px;color:#000; transform:scaleX(0.9654);">Страна-производ…</span><span class="t" style="left:342.30px;top:274px;font-size:11.5px;color:#000; transform:scaleX(0.9488);">Строка</span><span class="t" style="left:451.30px;top:274px;font-size:11.5px;color:#000; transform:scaleX(0.9939);">&lt;Не определено&gt;</span><span class="t" style="left:234.00px;top:296px;font-size:11.5px;color:#000; transform:scaleX(0.9456);">Вебсайт Производ…</span><span class="t" style="left:342.30px;top:296px;font-size:11.5px;color:#000; transform:scaleX(0.9488);">Строка</span><span class="t" style="left:450.20px;top:296px;font-size:11.5px;color:#000; transform:scaleX(0.9966);">www.graphisoft.ru</span><span class="t" style="left:234.00px;top:318px;font-size:11.5px;color:#000; transform:scaleX(0.9511);">Контактная Инфо…</span><span class="t" style="left:342.30px;top:318px;font-size:11.5px;color:#000; transform:scaleX(0.9488);">Строка</span><span class="t" style="left:451.30px;top:318px;font-size:11.5px;color:#000; transform:scaleX(0.9939);">&lt;Не определено&gt;</span><span class="t" style="left:234.00px;top:340px;font-size:11.5px;color:#000; transform:scaleX(0.9459);">Дата Истечения Г…</span><span class="t" style="left:342.30px;top:340px;font-size:11.5px;color:#000; transform:scaleX(0.9488);">Строка</span><span class="t" style="left:451.30px;top:340px;font-size:11.5px;color:#000; transform:scaleX(0.9939);">&lt;Не определено&gt;</span><span class="t" style="left:232.30px;top:363px;font-size:11.8px;color:#000;font-weight:700; transform:scaleX(0.9600);">Заполнения Проемов</span><span class="t" style="left:234.00px;top:383px;font-size:11.5px;color:#000; transform:scaleX(0.9800);">Пожарный Выход</span><span class="t" style="left:342.30px;top:383px;font-size:11.5px;color:#000; transform:scaleX(0.9476);">Критерий Соответ…</span><span class="t" style="left:451.30px;top:383px;font-size:11.5px;color:#000; transform:scaleX(0.9939);">&lt;Не определено&gt;</span><span class="t" style="left:234.00px;top:405px;font-size:11.5px;color:#000; transform:scaleX(0.9518);">Обеспечение Дос…</span><span class="t" style="left:342.30px;top:405px;font-size:11.5px;color:#000; transform:scaleX(0.9476);">Критерий Соответ…</span><span class="t" style="left:451.30px;top:405px;font-size:11.5px;color:#000; transform:scaleX(0.9939);">&lt;Не определено&gt;</span><span class="t" style="left:234.00px;top:427px;font-size:11.5px;color:#000; transform:scaleX(0.9306);">Автоматическое З…</span><span class="t" style="left:342.30px;top:427px;font-size:11.5px;color:#000; transform:scaleX(0.9476);">Критерий Соответ…</span><span class="t" style="left:451.30px;top:427px;font-size:11.5px;color:#000; transform:scaleX(0.9939);">&lt;Не определено&gt;</span><span class="t" style="left:234.00px;top:449px;font-size:11.5px;color:#000; transform:scaleX(0.9608);">Противодымовая …</span><span class="t" style="left:342.30px;top:449px;font-size:11.5px;color:#000; transform:scaleX(0.9476);">Критерий Соответ…</span><span class="t" style="left:451.30px;top:449px;font-size:11.5px;color:#000; transform:scaleX(0.9939);">&lt;Не определено&gt;</span><span class="t" style="left:234.00px;top:470px;font-size:11.5px;color:#000; transform:scaleX(0.9356);">Класс Защиты от …</span><span class="t" style="left:342.30px;top:470px;font-size:11.5px;color:#000; transform:scaleX(0.9988);">Набор Параметров</span><span class="t" style="left:451.30px;top:470px;font-size:11.5px;color:#000; transform:scaleX(0.9939);">&lt;Не определено&gt;</span><span class="t" style="left:232.30px;top:493px;font-size:11.8px;color:#000;font-weight:700; transform:scaleX(0.9603);">Шумозащита</span><span class="t" style="left:234.00px;top:514px;font-size:11.5px;color:#000; transform:scaleX(0.9757);">Уровень Шумоиз…</span><span class="t" style="left:342.30px;top:514px;font-size:11.5px;color:#000; transform:scaleX(0.9488);">Строка</span><span class="t" style="left:450.20px;top:514px;font-size:11.5px;color:#000; transform:scaleX(0.9131);">30 дБА</span><span class="t" style="left:234.00px;top:536px;font-size:11.5px;color:#000; transform:scaleX(0.9023);">Rw</span><span class="t" style="left:342.30px;top:536px;font-size:11.5px;color:#000; transform:scaleX(0.9488);">Строка</span><span class="t" style="left:450.20px;top:536px;font-size:11.5px;color:#000; transform:scaleX(0.9091);">55 дБ</span><span class="t" style="left:234.00px;top:557px;font-size:11.5px;color:#000; transform:scaleX(0.9285);">Lnw</span><span class="t" style="left:342.30px;top:557px;font-size:11.5px;color:#000; transform:scaleX(0.9488);">Строка</span><span class="t" style="left:450.20px;top:557px;font-size:11.5px;color:#000; transform:scaleX(0.9091);">55 дБ</span><span class="t" style="left:234.00px;top:579px;font-size:11.5px;color:#000; transform:scaleX(0.9359);">Ra тран.</span><span class="t" style="left:342.30px;top:579px;font-size:11.5px;color:#000; transform:scaleX(0.9488);">Строка</span><span class="t" style="left:450.20px;top:579px;font-size:11.5px;color:#000; transform:scaleX(0.9131);">30 дБА</span><span class="t" style="left:234.00px;top:601px;font-size:11.5px;color:#000; transform:scaleX(0.9460);">Класс Звукоизоля…</span><span class="t" style="left:342.30px;top:601px;font-size:11.5px;color:#000; transform:scaleX(0.9488);">Строка</span><span class="t" style="left:450.20px;top:601px;font-size:11.5px;color:#000; transform:scaleX(0.9455);">25</span><span class="t" style="left:232.30px;top:624px;font-size:11.8px;color:#000;font-weight:700; transform:scaleX(0.9435);">Зоны</span></div>
<svg style="position:absolute;left:191px;top:630px" width="440" height="68" viewBox="191 630 440 68"><rect x="206" y="639" width="12.800" height="12.800" fill="#fff" stroke="#333" stroke-width="1"/><rect x="206.5" y="664.5" width="128" height="24" fill="#e1e1e1" stroke="#adadad" stroke-width="1"/><path d="M311.500 667v19" stroke="#adadad"/><path d="M319.500 674h7.200l-3.600 4.200z" fill="#333"/><rect x="348" y="664.5" width="129" height="24" fill="#cccccc" stroke="#c4c4c4" stroke-width="1"/><rect x="487.5" y="664.5" width="23" height="24" fill="#e1e1e1" stroke="#adadad" stroke-width="1"/><circle cx="499" cy="676.500" r="6" fill="none" stroke="#222" stroke-width="1.300"/><path d="M499 675.500v4.500" stroke="#222" stroke-width="1.700"/><circle cx="499" cy="673.300" r="1" fill="#222"/><rect x="517.5" y="664.5" width="41" height="24" fill="#e1e1e1" stroke="#adadad" stroke-width="1"/><path d="M534.500 670q0-1.500 1.500-1.500h5l4.500 4.500v9.500q0 1.500-1.500 1.500h-8q-1.500 0-1.500-1.500z" fill="#fff" stroke="#222" stroke-width="1.400"/><path d="M541 668.500v4.500h4.500" fill="none" stroke="#222" stroke-width="1.200"/><path d="M534.500 674.500v4.600" stroke="#e1e1e1" stroke-width="2.500"/><path d="M530 676.800h9.500M536.500 673.800l3 3l-3 3" fill="none" stroke="#2f7de0" stroke-width="1.300"/><rect x="561.5" y="664.5" width="41" height="24" fill="#e1e1e1" stroke="#adadad" stroke-width="1"/><path d="M573 670q0-1.500 1.500-1.500h5.500l4 4v9.500q0 1.500-1.500 1.500h-8q-1.500 0-1.500-1.500z" fill="#fff" stroke="#222" stroke-width="1.400"/><path d="M580 668.500v4h4" fill="none" stroke="#222" stroke-width="1.200"/><path d="M584 674.500v4.600" stroke="#e1e1e1" stroke-width="2.500"/><path d="M579 676.800h11M587 673.800l3 3l-3 3" fill="none" stroke="#2f7de0" stroke-width="1.300"/></svg>
<span class="t" style="left:222.30px;top:641px;font-size:11.5px;color:#000; transform:scaleX(0.9704);">Показать конфликты со Свойствами в Связанных Модулях</span>
<span class="t" style="left:238.80px;top:671px;font-size:11.8px;color:#000; transform:scaleX(0.8951);">Новое…</span>
<span class="t" style="left:392.00px;top:671px;font-size:11.8px;color:#8c8c8c; transform:scaleX(0.8991);">Удалить</span>
<div style="position:absolute;left:617px;top:136.5px;width:8.5px;height:561px;background:#f6f6f6"></div>
<svg style="position:absolute;left:618px;top:143px;" width="7" height="9" viewBox="0 0 7 9"><path d="M5.800 .8v7.400l-4.800-3.700z" fill="#333"/></svg>
<svg style="position:absolute;left:626px;top:136px" width="462" height="562" viewBox="626 136 462 562"><rect x="639.500" y="168.500" width="435" height="23" fill="#f2f2f2" stroke="#d2d2d2"/><rect x="639.500" y="228" width="435" height="47" fill="#f2f2f2" stroke="#d2d2d2"/><path d="M1059.500 240l4.500-4.500l4.500 4.500M1059.500 262l4.500 4.500l4.500-4.500" fill="none" stroke="#c3c3c3" stroke-width="1.200"/><rect x="638.500" y="292.700" width="437" height="17.500" rx="2.500" fill="#d9d9d9"/><path d="M648 297.300v6.400l4-3.200z" fill="#8a8a8a"/><rect x="638.500" y="314.500" width="437" height="24" rx="2.500" fill="#d9d9d9"/><path d="M645.800 324h7.400l-3.700 4.300z" fill="#222"/><circle cx="667.500" cy="383.8" r="6.200" fill="#fff" stroke="#bdbdbd" stroke-width="1"/><circle cx="667.500" cy="411.5" r="6.200" fill="#fff" stroke="#bdbdbd" stroke-width="1"/><circle cx="667.500" cy="439" r="6.200" fill="#fff" stroke="#bdbdbd" stroke-width="1"/><circle cx="667.500" cy="439" r="3.300" fill="#c2c2c2"/><rect x="662" y="459.5" width="128.5" height="24" fill="#cccccc" stroke="#c4c4c4" stroke-width="1"/><rect x="803.500" y="372.500" width="265.500" height="242.500" fill="#f0f0f0" stroke="#828282" stroke-width="1"/><path d="M804.500 373.500h263.500" fill="none" stroke="#c4c4c4" stroke-width="1"/><path d="M1054.500 383l4.500-4.500l4.500 4.500M1054.500 601.500l4.500 4.500l4.500-4.500" fill="none" stroke="#c3c3c3" stroke-width="1.200"/><rect x="678" y="625" width="52.5" height="23" fill="#cccccc" stroke="#c4c4c4" stroke-width="1"/><rect x="738" y="625" width="52.5" height="23" fill="#cccccc" stroke="#c4c4c4" stroke-width="1"/><g transform="translate(693.500 636) rotate(45) scale(1.150)"><path d="M-1.700 -2.500h3.400v8l-1.700 2.800l-1.700-2.800z" fill="#9db7de"/><path d="M-1.700 -6.500q1.700 -2 3.400 0v4h-3.400z M-1.700 -2.500v8l1.700 2.800l1.700-2.800v-8 M-3.300 -2.500h6.600" fill="none" stroke="#8f8f8f" stroke-width="1"/></g><path d="M709 641.500h7q2.500 0 2.500-2.500v-7M715.500 634.500l3-3l3 3" fill="none" stroke="#9a9a9a" stroke-width="1.200"/><g transform="translate(755 636) rotate(45) scale(1.150)"><path d="M-1.600 -.5h3.200v6h-3.200z" fill="#9db7de"/><path d="M-1.600 -4.500h3.200v10h-3.200z M0 5.500v4 M-3 -4.500h6 M0 -4.500v-3.500 M-2.400 -8h4.800" fill="none" stroke="#8f8f8f" stroke-width="1"/></g><path d="M767 631.500h6q4 0 4 4v5.500M774 638l3 3l3-3" fill="none" stroke="#9a9a9a" stroke-width="1.200"/><rect x="804" y="624" width="264" height="24" fill="#e1e1e1" stroke="#adadad" stroke-width="1"/><path d="M634 657.500h445" stroke="#a0a0a0" stroke-width="1"/><rect x="870.5" y="665.5" width="89.5" height="22.5" fill="#e1e1e1" stroke="#adadad" stroke-width="1"/><rect x="980.500" y="665" width="89" height="23.500" fill="#e1e1e1" stroke="#0078d7" stroke-width="2"/><rect x="1083.5" y="687" width="2.200" height="2" fill="#b0b0b0"/><rect x="1083.5" y="690.5" width="2.200" height="2" fill="#b0b0b0"/><rect x="1083.5" y="694" width="2.200" height="2" fill="#b0b0b0"/><rect x="1080" y="690.5" width="2.200" height="2" fill="#b0b0b0"/><rect x="1080" y="694" width="2.200" height="2" fill="#b0b0b0"/><rect x="1076.5" y="694" width="2.200" height="2" fill="#b0b0b0"/></svg>
<span class="t" style="left:639.90px;top:152px;font-size:11.5px;color:#000; transform:scaleX(0.9584);">Имя Свойства:</span>
<span class="t" style="left:984.40px;top:149px;font-size:11.5px;color:#000; transform:scaleX(0.9411);">Редактируемых: 0</span>
<span class="t" style="left:639.90px;top:207px;font-size:11.5px;color:#000; transform:scaleX(0.9268);">Описание:</span>
<span class="t" style="left:661.00px;top:296px;font-size:11.5px;color:#707070;font-weight:700; transform:scaleX(0.9399);">ОПРЕДЕЛЕНИЕ ЗНАЧЕНИЯ</span>
<span class="t" style="left:661.00px;top:322px;font-size:11.5px;color:#111;font-weight:700; transform:scaleX(0.9558);">ДОСТУПНОСТЬ ДЛЯ КЛАССОВ</span>
<span class="t" style="left:643.70px;top:348px;font-size:11.5px;color:#000; transform:scaleX(0.9726);">Доступно для элементов следующих Классов:</span>
<span class="t" style="left:677.80px;top:379px;font-size:11.5px;color:#777; transform:scaleX(0.8473);">Все</span>
<span class="t" style="left:677.80px;top:407px;font-size:11.5px;color:#777; transform:scaleX(0.9187);">Нет</span>
<span class="t" style="left:677.80px;top:434px;font-size:11.5px;color:#777; transform:scaleX(0.9316);">Специальные</span>
<span class="t" style="left:683.50px;top:467px;font-size:11.8px;color:#8c8c8c; transform:scaleX(0.9025);">Редактировать…</span>
<span class="t" style="left:644.30px;top:605px;font-size:11.5px;color:#000; transform:scaleX(0.9759);">Передача:</span>
<span class="t" style="left:862.70px;top:631px;font-size:11.8px;color:#000; transform:scaleX(0.9207);">Менеджер Классификаций…</span>
<span class="t" style="left:890.00px;top:672px;font-size:11.8px;color:#000; transform:scaleX(0.9090);">Отменить</span>
<span class="t" style="left:1017.00px;top:672px;font-size:11.8px;color:#000; transform:scaleX(0.9093);">OK</span>
</body></html>
